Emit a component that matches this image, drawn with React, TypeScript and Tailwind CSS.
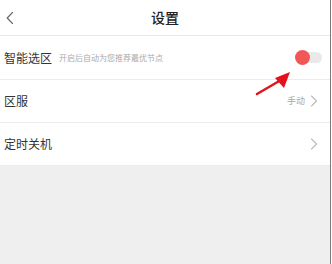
const FONT = { fontFamily: '"Noto Sans CJK SC", "Noto Sans", sans-serif' };

function Chevron({ dir = "right", className }: { dir?: "left" | "right"; className?: string }) {
  return (
    <svg className={className} width="8" height="12" viewBox="0 0 8 12" fill="none">
      <polyline
        points={dir === "right" ? "1.5,1 6.5,6 1.5,11" : "6.5,0.5 1.2,6 6.5,11.5"}
        stroke="currentColor"
        strokeWidth="1.1"
        strokeLinecap="round"
        strokeLinejoin="round"
      />
    </svg>
  );
}

function Row({ label, right }: { label: string; right?: React.ReactNode }) {
  return (
    <div className="flex h-[43px] items-center justify-between border-b border-[#ececec] bg-white pl-1 pr-[12px]">
      <span className="text-[12px] text-[#333]">{label}</span>
      {right}
    </div>
  );
}

export default function App() {
  return (
    <div className="flex h-[264px] w-[332px] bg-white" style={FONT}>
      <div className="relative flex w-[330px] flex-col bg-[#efefef]">
        <header className="relative flex h-[36px] items-center justify-center border-b border-[#e8e8e8] bg-white">
          <Chevron dir="left" className="absolute left-[6px] top-[12px] text-[#666]" />
          <span className="text-[14px] font-medium text-[#222]">设置</span>
        </header>

        <div className="flex h-[44px] items-center justify-between border-b border-[#ececec] bg-white pl-1 pr-[8px]">
          <div className="flex items-center gap-[7px]">
            <span className="text-[12px] text-[#333]">智能选区</span>
            <span className="text-[8px] text-[#aaa]">开启后自动为您推荐最优节点</span>
          </div>
          <div className="relative h-[11px] w-[26px] rounded-full bg-[#e9e9e9]">
            <div className="absolute left-[-1px] top-[-2px] h-[15px] w-[15px] rounded-full bg-[#f25757]" />
          </div>
        </div>

        <Row
          label="区服"
          right={
            <div className="flex items-center gap-[5px]">
              <span className="text-[9px] text-[#aaa]">手动</span>
              <Chevron className="text-[#bbb]" />
            </div>
          }
        />
        <Row label="定时关机" right={<Chevron className="text-[#bbb]" />} />

        <svg className="pointer-events-none absolute left-0 top-0" width="330" height="264">
          <line x1="257" y1="94" x2="281" y2="80" stroke="#e3121c" strokeWidth="2.5" strokeLinecap="round" />
          <polygon points="290,72 275,78 284,88" fill="#e3121c" />
        </svg>
      </div>
      <div className="w-px bg-[#7a7a7a]" />
      <div className="w-px bg-white" />
    </div>
  );
}
